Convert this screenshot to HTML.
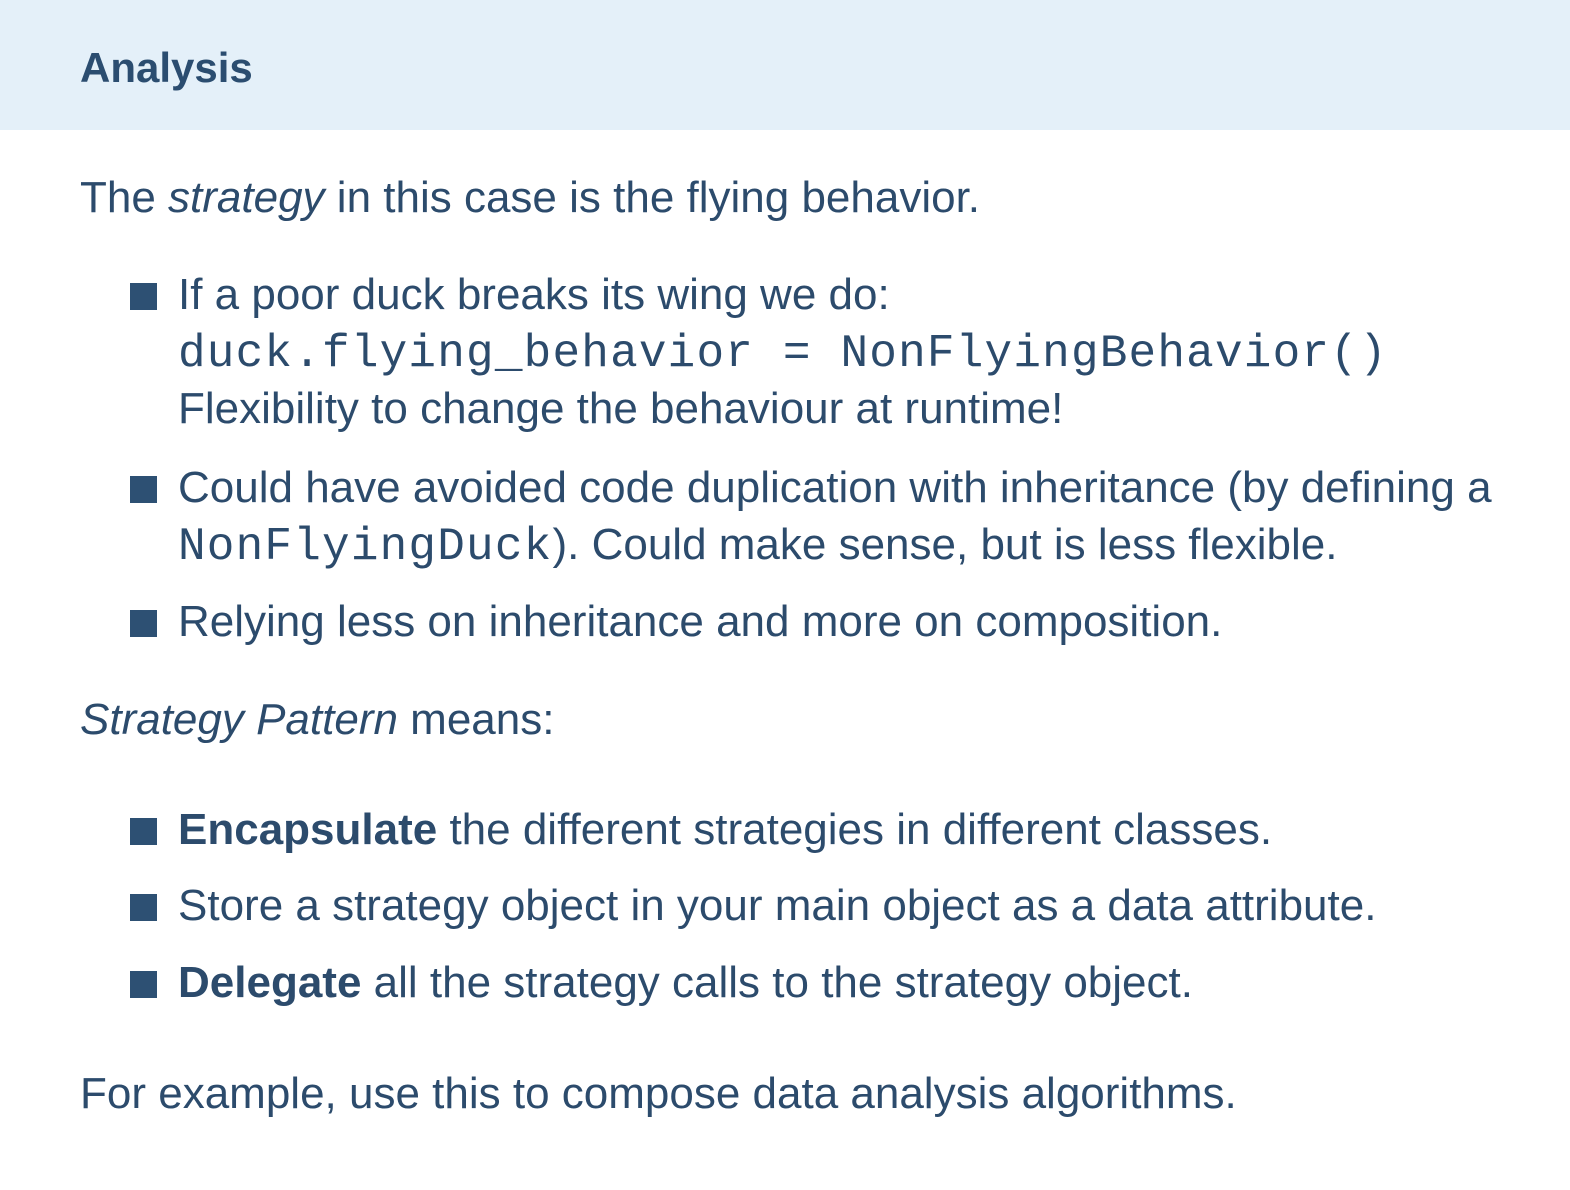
<!DOCTYPE html>
<html><head><meta charset="utf-8"><style>
body{margin:0;width:1570px;height:1190px;background:#fff;position:relative;overflow:hidden;font-family:"Liberation Sans",sans-serif;color:#2c4b6c}
.hdr{position:absolute;left:0;top:0;width:1570px;height:130px;background:#e4f0f9}
.t{position:absolute;left:80px;top:47px;font-size:42px;font-weight:bold;line-height:42px;color:#2b4d70}
.l{position:absolute;font-size:44px;line-height:44px;white-space:nowrap}
.m{font-family:"Liberation Mono",monospace;font-size:46px;letter-spacing:1.2px}
.sq{position:absolute;left:130px;width:27px;height:27px;background:#2d5073}
</style></head><body>
<div class="hdr"></div>
<div class="t">Analysis</div>
<div class="l" style="left:80px;top:176px">The <i>strategy</i> in this case is the flying behavior.</div>
<div class="sq" style="top:283px"></div>
<div class="l" style="left:178px;top:273px">If a poor duck breaks its wing we do:</div>
<div class="l" style="left:178px;top:330px"><span class="m">duck.flying_behavior = NonFlyingBehavior()</span></div>
<div class="l" style="left:178px;top:387px">Flexibility to change the behaviour at runtime!</div>
<div class="sq" style="top:476px"></div>
<div class="l" style="left:178px;top:466px">Could have avoided code duplication with inheritance (by defining a</div>
<div class="l" style="left:178px;top:523px"><span class="m">NonFlyingDuck</span>). Could make sense, but is less flexible.</div>
<div class="sq" style="top:610px"></div>
<div class="l" style="left:178px;top:600px">Relying less on inheritance and more on composition.</div>
<div class="l" style="left:80px;top:698px"><i>Strategy Pattern</i> means:</div>
<div class="sq" style="top:818px"></div>
<div class="l" style="left:178px;top:808px"><b>Encapsulate</b> the different strategies in different classes.</div>
<div class="sq" style="top:894px"></div>
<div class="l" style="left:178px;top:884px">Store a strategy object in your main object as a data attribute.</div>
<div class="sq" style="top:971px"></div>
<div class="l" style="left:178px;top:961px"><b>Delegate</b> all the strategy calls to the strategy object.</div>
<div class="l" style="left:80px;top:1072px">For example, use this to compose data analysis algorithms.</div>
</body></html>
